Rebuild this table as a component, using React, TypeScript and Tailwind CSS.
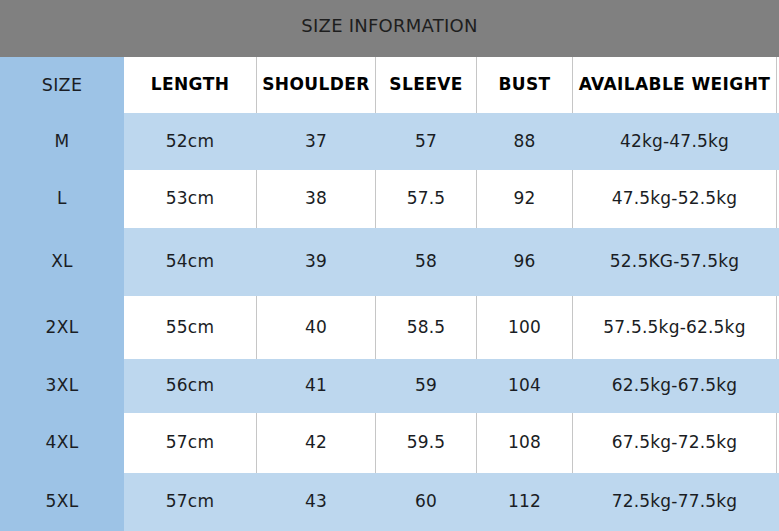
import React from "react";

const rows: { size: string; vals: string[]; h: number; blue: boolean }[] = [
  { size: "M", vals: ["52cm", "37", "57", "88", "42kg-47.5kg"], h: 57, blue: true },
  { size: "L", vals: ["53cm", "38", "57.5", "92", "47.5kg-52.5kg"], h: 58, blue: false },
  { size: "XL", vals: ["54cm", "39", "58", "96", "52.5KG-57.5kg"], h: 68, blue: true },
  { size: "2XL", vals: ["55cm", "40", "58.5", "100", "57.5.5kg-62.5kg"], h: 63, blue: false },
  { size: "3XL", vals: ["56cm", "41", "59", "104", "62.5kg-67.5kg"], h: 54, blue: true },
  { size: "4XL", vals: ["57cm", "42", "59.5", "108", "67.5kg-72.5kg"], h: 60, blue: false },
  { size: "5XL", vals: ["57cm", "43", "60", "112", "72.5kg-77.5kg"], h: 58, blue: true },
];

const widths = ["w-[132px]", "w-[119px]", "w-[101px]", "w-[96px]", "w-[204px]"];

export default function App() {
  const font = { fontFamily: '"DejaVu Sans", Verdana, sans-serif' };
  return (
    <div className="w-[779px] h-[531px] overflow-hidden bg-white text-[#1a1d24]" style={font}>
      <div className="h-[57px] bg-[#808080] flex items-center justify-center text-[18px] tracking-[0.25px] text-[#1e1e1e] pb-[7px]">
        SIZE INFORMATION
      </div>
      <div className="flex h-[56px] bg-white">
        <div className="w-[124px] bg-[#9dc3e6] flex items-center justify-center text-[17.5px] tracking-[0.3px]">SIZE</div>
        {["LENGTH", "SHOULDER", "SLEEVE", "BUST", "AVAILABLE WEIGHT"].map((t, i) => (
          <div
            key={t}
            className={`${widths[i]} ${i > 0 ? "border-l border-[#c6c6c6]" : ""} flex items-center justify-center text-[17px] font-bold text-black tracking-[0.4px]`}
          >
            {t}
          </div>
        ))}
        <div className="w-[3px] border-l border-[#c6c6c6]" />
      </div>
      {rows.map((r) => (
        <div key={r.size} className={`flex ${r.blue ? "bg-[#bdd7ee]" : "bg-white"}`} style={{ height: r.h }}>
          <div className="w-[124px] bg-[#9dc3e6] flex items-center justify-center text-[17px] tracking-[0.3px]">{r.size}</div>
          {r.vals.map((v, i) => (
            <div
              key={i}
              className={`${widths[i]} ${i > 0 ? (r.blue ? "border-l border-[#bdd7ee]" : "border-l border-[#c6c6c6]") : ""} flex items-center justify-center text-[17px] tracking-[0.2px]`}
            >
              {v}
            </div>
          ))}
          <div className={`w-[3px] border-l ${r.blue ? "border-[#bdd7ee]" : "border-[#c6c6c6]"}`} />
        </div>
      ))}
    </div>
  );
}
